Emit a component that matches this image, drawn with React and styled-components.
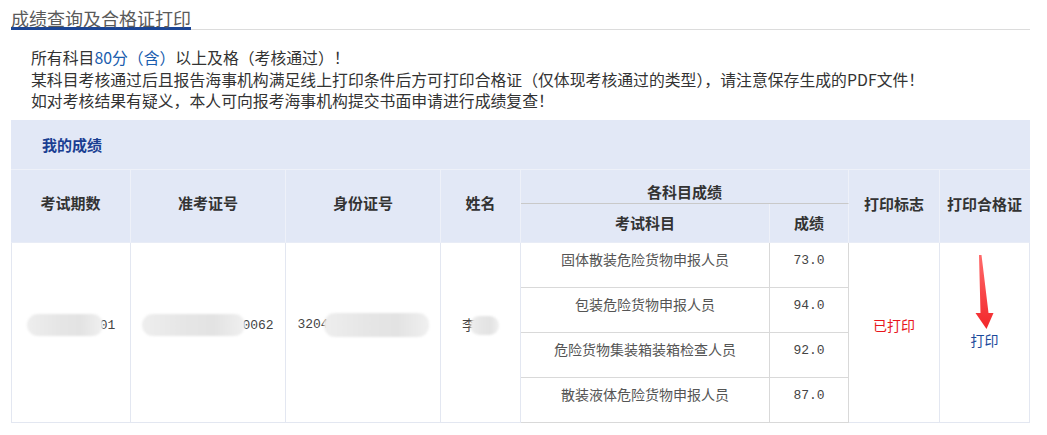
import React from "react";
import styled, { createGlobalStyle } from "styled-components";

const GlobalStyle = createGlobalStyle`
  body {
    margin: 0;
    background: #fff;
    font-family: "Noto Sans CJK SC", "Noto Sans", sans-serif;
  }
`;

const Page = styled.div`
  width: 1019px;
  padding: 10px 0 0 11px;
`;

const TitleBar = styled.div`
  display: flex;
  border-bottom: 1px solid #dcdcdc;
`;

const Title = styled.h2`
  margin: 0 0 -1px;
  font-size: 18px;
  font-weight: normal;
  line-height: 17px;
  color: #5a5a5a;
  border-bottom: 3px solid #1b4595;
`;

const Notice = styled.div`
  margin-top: 17px;
  padding-left: 20px;
  font-size: 15.85px;
  line-height: 21.5px;
  color: #333;
`;

const Hi = styled.span`
  color: #1a5dae;
`;

const Table = styled.table`
  margin-top: 8px;
  width: 1019px;
  table-layout: fixed;
  border-collapse: separate;
  border-spacing: 0;
  font-size: 14px;
`;

const Col = styled.col`
  width: ${(p) => p.$w}px;
`;

const Caption = styled.td`
  height: 49px;
  padding: 0 0 0 31px;
  background: #e2e8f6;
  border-bottom: 1px solid #eef1f9;
  color: #1a3e92;
  font-size: 15px;
  font-weight: bold;
`;

const Th = styled.th`
  padding: 0;
  padding-bottom: ${(p) => p.$pb || 0}px;
  background: #e2e8f6;
  border-right: 1px solid ${(p) => (p.$last ? "#e2e8f6" : "#eef1f9")};
  border-bottom: ${(p) => (p.$split ? "1px solid #c9c9c9" : "1px solid #e8ecf6")};
  color: #333;
  font-size: 15px;
  font-weight: bold;
  vertical-align: ${(p) => p.$va || "middle"};
  line-height: 20px;
`;

const HeadRow = styled.tr`
  height: ${(p) => p.$h}px;
`;

const BodyRow = styled.tr`
  height: 45px;
`;

const Cell = styled.td`
  padding: ${(p) => p.$pt || 0}px 0 ${(p) => p.$pb || 0}px;
  border-right: 1px solid ${(p) => p.$line || "#e3e7f1"};
  border-bottom: 1px solid ${(p) => p.$line || "#e3e7f1"};
  border-left: ${(p) => (p.$first ? "1px solid #e3e7f1" : "none")};
  text-align: center;
  vertical-align: middle;
  color: ${(p) => p.$color || "#555"};
  line-height: 20px;
  position: ${(p) => (p.$anchor ? "relative" : "static")};
`;

const Mono = styled.span`
  font-family: "Liberation Mono", "DejaVu Sans Mono", monospace;
  font-size: 13px;
  color: #444;
`;

const Blur = styled.span`
  display: inline-block;
  vertical-align: middle;
  width: ${(p) => p.$w}px;
  height: ${(p) => p.$h || 22}px;
  margin: 0 ${(p) => p.$mr || 0}px 0 ${(p) => p.$ml || 0}px;
  border-radius: 11px;
  background: linear-gradient(90deg, #eeeeee, #e6e6e6 40%, #e3e3e3 70%, #f0f0f0);
  filter: blur(1px);
`;

const Link = styled.a`
  color: #1b4a9b;
  text-decoration: none;
  cursor: pointer;
`;

const Arrow = styled.svg`
  position: absolute;
  left: 35px;
  top: 10px;
`;

const subjects = [
  ["固体散装危险货物申报人员", "73.0"],
  ["包装危险货物申报人员", "94.0"],
  ["危险货物集装箱装箱检查人员", "92.0"],
  ["散装液体危险货物申报人员", "87.0"],
];

const widths = [120, 155, 155, 80, 249, 79, 91, 90];

export default function App() {
  return (
    <>
      <GlobalStyle />
      <Page>
        <TitleBar>
          <Title>成绩查询及合格证打印</Title>
        </TitleBar>
        <Notice>
          <div>
            所有科目<Hi>80分（含）</Hi>以上及格（考核通过）！
          </div>
          <div>
            某科目考核通过后且报告海事机构满足线上打印条件后方可打印合格证（仅体现考核通过的类型），请注意保存生成的PDF文件！
          </div>
          <div>如对考核结果有疑义，本人可向报考海事机构提交书面申请进行成绩复查！</div>
        </Notice>
        <Table>
          <colgroup>
            {widths.map((w, i) => (
              <Col key={i} $w={w} />
            ))}
          </colgroup>
          <tbody>
            <tr>
              <Caption colSpan={8}>我的成绩</Caption>
            </tr>
            <HeadRow $h={34}>
              <Th rowSpan={2} $pb={5}>考试期数</Th>
              <Th rowSpan={2} $pb={5}>准考证号</Th>
              <Th rowSpan={2} $pb={5}>身份证号</Th>
              <Th rowSpan={2} $pb={5}>姓名</Th>
              <Th colSpan={2} $split $va="bottom" $pb={1}>
                各科目成绩
              </Th>
              <Th rowSpan={2} $pb={3}>打印标志</Th>
              <Th rowSpan={2} $pb={3} $last>
                打印合格证
              </Th>
            </HeadRow>
            <HeadRow $h={39}>
              <Th>考试科目</Th>
              <Th>成绩</Th>
            </HeadRow>
            {subjects.map(([name, score], i) => (
              <BodyRow key={name}>
                {i === 0 && (
                  <>
                    <Cell rowSpan={4} $first $pb={15}>
                      <Blur $w={76} $mr={-3} />
                      <Mono>01</Mono>
                    </Cell>
                    <Cell rowSpan={4} $pb={15}>
                      <Blur $w={103} $mr={-3} />
                      <Mono>0062</Mono>
                    </Cell>
                    <Cell rowSpan={4} $pb={15}>
                      <Mono>3204</Mono>
                      <Blur $w={105} $h={24} $ml={-5} />
                    </Cell>
                    <Cell rowSpan={4} $pb={15} $color="#444">
                      李<Blur $w={29} $h={19} $ml={-6} />
                    </Cell>
                  </>
                )}
                <Cell $line="#d9d9d9" $pb={11}>
                  {name}
                </Cell>
                <Cell $line="#d9d9d9" $pb={11}>
                  <Mono>{score}</Mono>
                </Cell>
                {i === 0 && (
                  <>
                    <Cell rowSpan={4} $pb={14} $color="#e8161c">
                      已打印
                    </Cell>
                    <Cell rowSpan={4} $pt={16} $anchor>
                      <Arrow width="20" height="78" viewBox="0 0 20 78">
                        <defs>
                          <linearGradient id="ar" x1="0" y1="0" x2="0" y2="1">
                            <stop offset="0" stopColor="#ff6a6a" />
                            <stop offset="1" stopColor="#f2262a" />
                          </linearGradient>
                        </defs>
                        <polygon
                          points="4,2 6.5,2 13.5,60 18.5,60 11.5,76 0.5,60 5.5,60"
                          fill="url(#ar)"
                        />
                      </Arrow>
                      <Link>打印</Link>
                    </Cell>
                  </>
                )}
              </BodyRow>
            ))}
          </tbody>
        </Table>
      </Page>
    </>
  );
}
